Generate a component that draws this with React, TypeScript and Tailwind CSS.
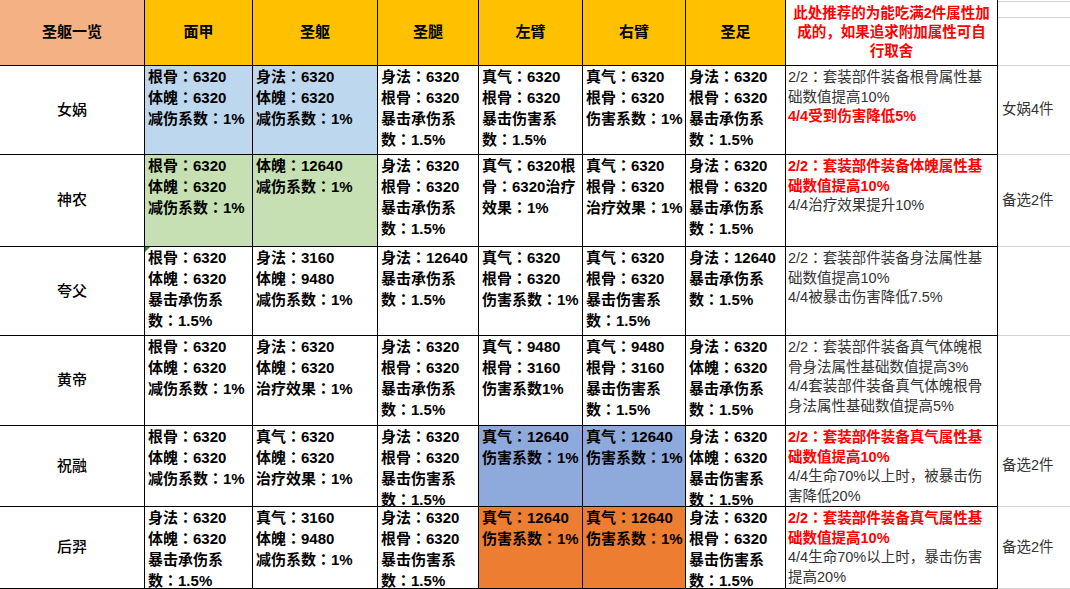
import React from "react";

type Cell = { lines: string[]; bg?: string };
type NoteBlock = { lines: string[]; red?: boolean };
type Row = {
  name: string;
  cells: Cell[];
  notes: NoteBlock[];
  pick?: string;
};

const BLUE = "bg-[#bdd7ee]";
const GREEN = "bg-[#c6e0b4]";
const MID_BLUE = "bg-[#8ea9db]";
const ORANGE = "bg-[#ed7d31]";

const parts = ["面甲", "圣躯", "圣腿", "左臂", "右臂", "圣足"];

const rows: Row[] = [
  {
    name: "女娲",
    cells: [
      { lines: ["根骨：6320", "体魄：6320", "减伤系数：1%"], bg: BLUE },
      { lines: ["身法：6320", "体魄：6320", "减伤系数：1%"], bg: BLUE },
      { lines: ["身法：6320", "根骨：6320", "暴击承伤系", "数：1.5%"] },
      { lines: ["真气：6320", "根骨：6320", "暴击伤害系", "数：1.5%"] },
      { lines: ["真气：6320", "根骨：6320", "伤害系数：1%"] },
      { lines: ["身法：6320", "根骨：6320", "暴击承伤系", "数：1.5%"] },
    ],
    notes: [
      { lines: ["2/2：套装部件装备根骨属性基", "础数值提高10%"] },
      { lines: ["4/4受到伤害降低5%"], red: true },
    ],
    pick: "女娲4件",
  },
  {
    name: "神农",
    cells: [
      { lines: ["根骨：6320", "体魄：6320", "减伤系数：1%"], bg: GREEN },
      { lines: ["体魄：12640", "减伤系数：1%"], bg: GREEN },
      { lines: ["身法：6320", "根骨：6320", "暴击承伤系", "数：1.5%"] },
      { lines: ["真气：6320根", "骨：6320治疗", "效果：1%"] },
      { lines: ["真气：6320", "根骨：6320", "治疗效果：1%"] },
      { lines: ["身法：6320", "根骨：6320", "暴击承伤系", "数：1.5%"] },
    ],
    notes: [
      { lines: ["2/2：套装部件装备体魄属性基", "础数值提高10%"], red: true },
      { lines: ["4/4治疗效果提升10%"] },
    ],
    pick: "备选2件",
  },
  {
    name: "夸父",
    cells: [
      { lines: ["根骨：6320", "体魄：6320", "暴击承伤系", "数：1.5%"] },
      { lines: ["身法：3160", "体魄：9480", "减伤系数：1%"] },
      { lines: ["身法：12640", "暴击承伤系", "数：1.5%"] },
      { lines: ["真气：6320", "根骨：6320", "伤害系数：1%"] },
      { lines: ["真气：6320", "根骨：6320", "暴击伤害系", "数：1.5%"] },
      { lines: ["身法：12640", "暴击承伤系", "数：1.5%"] },
    ],
    notes: [
      {
        lines: [
          "2/2：套装部件装备身法属性基",
          "础数值提高10%",
          "4/4被暴击伤害降低7.5%",
        ],
      },
    ],
  },
  {
    name: "黄帝",
    cells: [
      { lines: ["根骨：6320", "体魄：6320", "减伤系数：1%"] },
      { lines: ["身法：6320", "体魄：6320", "治疗效果：1%"] },
      { lines: ["身法：6320", "根骨：6320", "暴击承伤系", "数：1.5%"] },
      { lines: ["真气：9480", "根骨：3160", "伤害系数1%"] },
      { lines: ["真气：9480", "根骨：3160", "暴击伤害系", "数：1.5%"] },
      { lines: ["身法：6320", "体魄：6320", "暴击承伤系", "数：1.5%"] },
    ],
    notes: [
      {
        lines: [
          "2/2：套装部件装备真气体魄根",
          "骨身法属性基础数值提高3%",
          "4/4套装部件装备真气体魄根骨",
          "身法属性基础数值提高5%",
        ],
      },
    ],
  },
  {
    name: "祝融",
    cells: [
      { lines: ["根骨：6320", "体魄：6320", "减伤系数：1%"] },
      { lines: ["真气：6320", "体魄：6320", "治疗效果：1%"] },
      { lines: ["身法：6320", "根骨：6320", "暴击伤害系", "数：1.5%"] },
      { lines: ["真气：12640", "伤害系数：1%"], bg: MID_BLUE },
      { lines: ["真气：12640", "伤害系数：1%"], bg: MID_BLUE },
      { lines: ["身法：6320", "体魄：6320", "暴击伤害系", "数：1.5%"] },
    ],
    notes: [
      { lines: ["2/2：套装部件装备真气属性基", "础数值提高10%"], red: true },
      { lines: ["4/4生命70%以上时，被暴击伤", "害降低20%"] },
    ],
    pick: "备选2件",
  },
  {
    name: "后羿",
    cells: [
      { lines: ["身法：6320", "体魄：6320", "暴击承伤系", "数：1.5%"] },
      { lines: ["真气：3160", "体魄：9480", "减伤系数：1%"] },
      { lines: ["身法：6320", "根骨：6320", "暴击伤害系", "数：1.5%"] },
      { lines: ["真气：12640", "伤害系数：1%"], bg: ORANGE },
      { lines: ["真气：12640", "伤害系数：1%"], bg: ORANGE },
      { lines: ["身法：6320", "根骨：6320", "暴击伤害系", "数：1.5%"] },
    ],
    notes: [
      { lines: ["2/2：套装部件装备真气属性基", "础数值提高10%"], red: true },
      { lines: ["4/4生命70%以上时，暴击伤害", "提高20%"] },
    ],
    pick: "备选2件",
  },
];

// the sheet's font centres the full-width colon, the TC face does the same
function withColon(s: string) {
  return s.split("：").flatMap((part, i) =>
    i === 0
      ? [part]
      : [
          <span key={i} className="font-['Noto_Sans_CJK_TC'] leading-[0px]">
            ：
          </span>,
          part,
        ],
  );
}

export default function App() {
  return (
    <div className="w-[1070px] h-[589px] overflow-hidden bg-white text-black font-['Liberation_Sans','Noto_Sans_CJK_SC',sans-serif]">
      <div className="grid grid-cols-[145px_108px_125px_101px_104px_103px_100px_212px_1fr] grid-rows-[66px_89px_92px_89px_90px_81px_82px]">
        {/* header */}
        <div className="flex items-center justify-center border-r border-b border-black bg-[#f4b183] text-[15px] font-bold">
          圣躯一览
        </div>
        {parts.map((p) => (
          <div
            key={p}
            className="flex items-center justify-center border-r border-b border-black bg-[#ffc000] text-[15px] font-bold"
          >
            {p}
          </div>
        ))}
        <div className="flex flex-col items-center justify-center border-r border-b border-black text-[14.5px] leading-[19px] font-bold text-[#ff0000]">
          <span>此处推荐的为能吃满2件属性加</span>
          <span>成的，如果追求附加属性可自</span>
          <span>行取舍</span>
        </div>
        <div className="flex flex-col border-b border-[#d4d4d4]">
          <div className="h-[2px] border-b border-[#d4d4d4]" />
          <div className="h-[16px] border-b border-[#d4d4d4]" />
        </div>

        {rows.map((row, ri) => (
          <React.Fragment key={row.name}>
            <div className="flex items-center justify-center border-r border-b border-black text-[15px] font-medium">
              {row.name}
            </div>
            {row.cells.map((cell, ci) => (
              <div
                key={ci}
                className={`relative overflow-hidden whitespace-nowrap border-r border-b border-black px-[3px] text-[15px] leading-[21px] font-bold ${cell.bg ?? ""}`}
              >
                {ri === 2 && ci === 0 && (
                  <span className="absolute left-0 top-0 h-0 w-0 border-t-[5px] border-r-[5px] border-t-[#1e8e3e] border-r-transparent" />
                )}
                {cell.lines.map((l, li) => (
                  <div key={li}>{withColon(l)}</div>
                ))}
              </div>
            ))}
            <div className="overflow-hidden whitespace-nowrap border-r border-b border-black px-[2px] pt-[2px] text-[14.5px] leading-[19.5px]">
              {row.notes.map((n, ni) => (
                <div
                  key={ni}
                  className={n.red ? "font-bold text-[#ff0000]" : "text-[#333333]"}
                >
                  {n.lines.map((l, li) => (
                    <div key={li}>{withColon(l)}</div>
                  ))}
                </div>
              ))}
            </div>
            <div className="flex items-center border-b border-[#d4d4d4] px-[4px] text-[14.5px] text-[#333333]">
              {row.pick}
            </div>
          </React.Fragment>
        ))}
      </div>
    </div>
  );
}
